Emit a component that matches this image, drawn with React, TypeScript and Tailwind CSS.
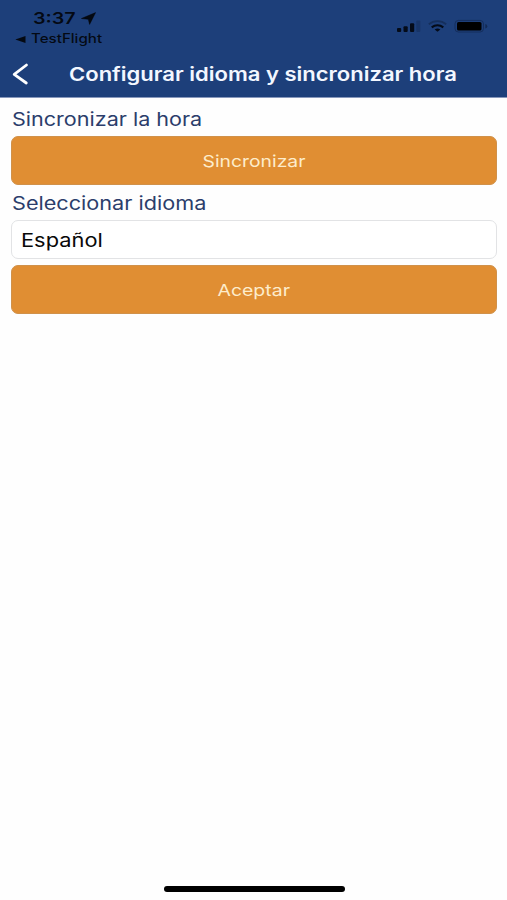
import type { ReactNode } from "react";

function StatusBar() {
  return (
    <div className="flex h-[50px] justify-between text-black/85">
      <div className="pt-[8px] pl-[15px]">
        <div className="flex h-[21px] items-center pl-[18px]">
          <span className="w-[48px] whitespace-nowrap text-[16px] leading-[21px] font-semibold">
            <span className="inline-block origin-left scale-x-[1.23]">3:37</span>
          </span>
          <svg className="h-[13px] w-[15px]" viewBox="0 0 15 13" fill="currentColor">
            <path d="M14.6 0.6 8.6 12.4 7.3 7.3 0.4 6.5Z" stroke="currentColor" strokeWidth="0.5" />
          </svg>
        </div>
        <div className="flex h-[19px] items-center pt-[1px]">
          <svg className="mr-[5px] h-[7px] w-[11px]" viewBox="0 0 11 7" fill="currentColor">
            <path d="M0.3 3.5 10.5 0v7Z" />
          </svg>
          <span className="inline-block origin-left scale-x-[1.21] text-[12.5px] leading-[18px] font-medium">
            TestFlight
          </span>
        </div>
      </div>
      <svg className="mt-[18px] mr-[17px] h-[16px] w-[94px]" viewBox="0 0 94 16">
        <g fill="#040b18">
          <rect x="1" y="10" width="4.2" height="4" rx="1" />
          <rect x="7.5" y="8.3" width="4.2" height="5.7" rx="1" />
          <rect x="14" y="5.3" width="4.2" height="8.7" rx="1" />
          <rect x="20.3" y="2.5" width="4" height="11.5" rx="1" opacity="0.18" />
          <path d="m41.5 13.8-2.8-2.2a4.6 4.6 0 0 1 5.6 0Z" />
          <rect x="61" y="4" width="24.5" height="8.5" rx="1.6" fill="#000" />
        </g>
        <path d="M35.7 9.3a9.5 9.5 0 0 1 11.6 0" fill="none" stroke="#040b18" strokeWidth="2.1" />
        <path d="M32.8 6.3a13.5 13.5 0 0 1 17.4 0" fill="none" stroke="#040b18" strokeWidth="1.8" opacity="0.3" />
        <rect x="59" y="2.4" width="28.5" height="11.6" rx="3.4" fill="none" stroke="#0b1b3a" strokeWidth="1" opacity="0.45" />
        <path d="M89.3 6v4.5q2-.6 2-2.25t-2-2.25Z" fill="#0b1b3a" opacity="0.6" />
      </svg>
    </div>
  );
}

function Label({ children }: { children: ReactNode }) {
  return <div className="pl-[1px] text-[18.5px] whitespace-nowrap text-[#2b3d6b]">{children}</div>;
}

function Button({ children }: { children: ReactNode }) {
  return (
    <button className="flex h-[49px] w-full items-center justify-center rounded-[7px] border border-[#d0914a] bg-[#e08e33] pt-[2px] text-[16.5px] text-[#fdeccb]">
      {children}
    </button>
  );
}

export default function App() {
  return (
    <div className="flex h-[900px] w-[507px] flex-col overflow-hidden bg-[#fefefe] font-['Inter',sans-serif]">
      <header className="h-[98px] border-b border-[#8797bb] bg-[#1d3f7a]">
        <StatusBar />
        <div className="flex h-[47px] items-center">
          <svg className="ml-[12px] h-[22px] w-[17px]" viewBox="0 0 17 22" fill="none" stroke="#fff" strokeWidth="2.8" strokeLinecap="round" strokeLinejoin="round">
            <path d="M14.5 2 2.2 11.3 14.3 20" />
          </svg>
          <h1 className="ml-[40px] pt-[2px] text-[18.5px] font-semibold whitespace-nowrap text-[#f3f7ff]">
            <span className="inline-block origin-left scale-x-[1.19]">Configurar idioma y sincronizar hora</span>
          </h1>
        </div>
      </header>
      <main className="flex flex-col pr-[10px] pl-[11px]">
        <div className="flex h-[38px] items-center pt-[5px]">
          <Label>
            <span className="inline-block origin-left scale-x-[1.165]">Sincronizar la hora</span>
          </Label>
        </div>
        <Button>
          <span className="inline-block scale-x-[1.17]">Sincronizar</span>
        </Button>
        <div className="flex h-[35px] items-center pt-[3px]">
          <Label>
            <span className="inline-block origin-left scale-x-[1.17]">Seleccionar idioma</span>
          </Label>
        </div>
        <div className="mb-[6px] flex h-[39px] items-center rounded-[7px] border border-[#e2e3e5] bg-white pt-[2px] pl-[9px] text-[18.5px] text-[#080808]">
          <span className="inline-block origin-left scale-x-[1.18]">Español</span>
        </div>
        <Button>
          <span className="inline-block scale-x-[1.18]">Aceptar</span>
        </Button>
      </main>
      <div className="mt-auto mb-[8.5px] ml-[164px] h-[6px] w-[181px] rounded-full bg-black" />
    </div>
  );
}
